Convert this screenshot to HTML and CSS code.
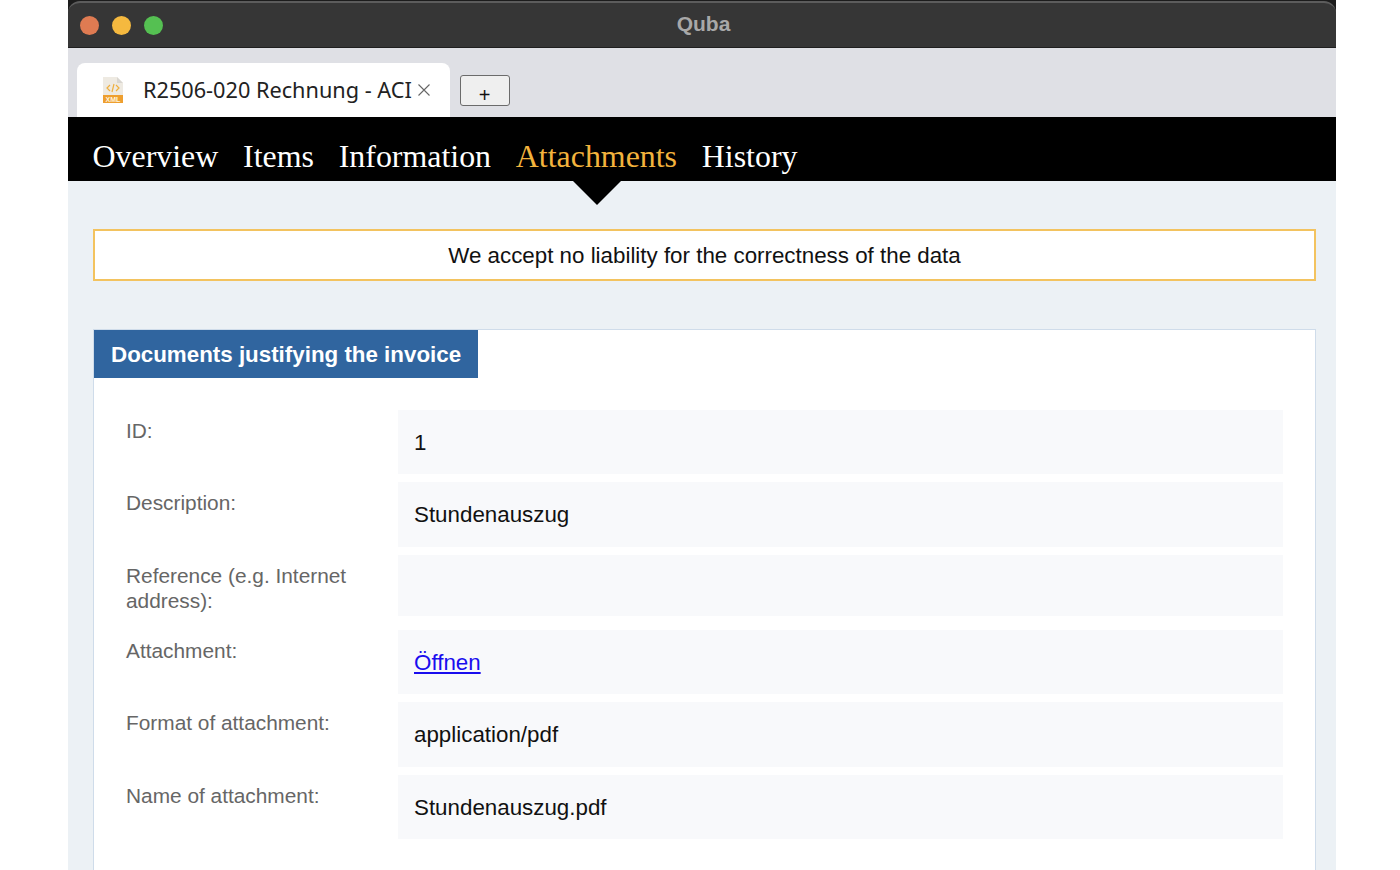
FILE: index.html
```html
<!DOCTYPE html>
<html lang="en">
<head>
    <meta charset="UTF-8">
    <title>Quba</title>
    <link rel="stylesheet" href="styles.css">
</head>
<body>
    <div class="window">
        <div class="titlebar-back">
            <div class="titlebar">
                <div class="lights">
                    <span class="light red"></span>
                    <span class="light yellow"></span>
                    <span class="light green"></span>
                </div>
                <div class="title">Quba</div>
            </div>
        </div>

        <div class="tabbar">
            <div class="tab">
                <svg class="file-icon" width="22" height="26" viewBox="0 0 22 26">
                    <path d="M1 0H15L21 6V18H1Z" fill="#eeeae2"/>
                    <path d="M15 0L21 6H15Z" fill="#d9d6d0"/>
                    <path d="M8 8L5 11L8 14M14 8L17 11L14 14M12 7L10 15" fill="none" stroke="#efb040" stroke-width="1.2"/>
                    <rect x="1" y="18" width="20" height="8" fill="#ee9f30"/>
                    <text x="11" y="25" class="file-label">XML</text>
                </svg>
                <span class="tab-name">R2506-020 Rechnung - ACI</span>
                <svg class="tab-close" width="14" height="14" viewBox="0 0 14 14">
                    <path d="M1.5 1.5L12.5 12.5M12.5 1.5L1.5 12.5" stroke="#666" stroke-width="1.1"/>
                </svg>
            </div>
            <button class="new-tab">+</button>
        </div>

        <nav class="menu">
            <a href="#">Overview</a>
            <a href="#">Items</a>
            <a href="#">Information</a>
            <a href="#" class="active">Attachments</a>
            <a href="#">History</a>
        </nav>

        <main class="content">
            <div class="notice">We accept no liability for the correctness of the data</div>

            <section class="box">
                <h2 class="box-title">Documents justifying the invoice</h2>
                <div class="rows">
                    <div class="row">
                        <div class="label">ID:</div>
                        <div class="value">1</div>
                    </div>
                    <div class="row">
                        <div class="label">Description:</div>
                        <div class="value">Stundenauszug</div>
                    </div>
                    <div class="row row-ref">
                        <div class="label">Reference (e.g. Internet address):</div>
                        <div class="value"></div>
                    </div>
                    <div class="row">
                        <div class="label">Attachment:</div>
                        <div class="value"><a href="#">Öffnen</a></div>
                    </div>
                    <div class="row">
                        <div class="label">Format of attachment:</div>
                        <div class="value">application/pdf</div>
                    </div>
                    <div class="row">
                        <div class="label">Name of attachment:</div>
                        <div class="value">Stundenauszug.pdf</div>
                    </div>
                </div>
            </section>
        </main>
    </div>
</body>
</html>
```

FILE: styles.css
```css
html, body {
    margin: 0;
    height: 100%;
    background: white;
    overflow: hidden;
}
body {
    font-family: "Liberation Sans", Arial, sans-serif;
}
.window {
    width: 1268px;
    height: 870px;
    margin-left: 68px;
    background: #ecf1f5;
    overflow: hidden;
}
.titlebar-back {
    height: 48px;
    padding-top: 1px;
    box-sizing: border-box;
    background: #1c1c1c;
}
.titlebar {
    box-sizing: border-box;
    height: 47px;
    display: flex;
    align-items: center;
    position: relative;
    background: #363636;
    border-top: 2px solid #5c5c5c;
    border-bottom: 1px solid #1f1f1f;
    border-radius: 12px 12px 0 0;
}
.lights {
    display: flex;
    gap: 13px;
    margin-left: 12px;
}
.light {
    width: 19px;
    height: 19px;
    border-radius: 50%;
}
.red { background: #df7b52; }
.yellow { background: #f5b93f; }
.green { background: #55c052; }
.title {
    position: absolute;
    left: 3px;
    right: 0;
    top: 9px;
    text-align: center;
    color: #a8a8a8;
    font-size: 21px;
    font-weight: bold;
    font-family: "Liberation Sans", sans-serif;
}
.tabbar {
    box-sizing: border-box;
    height: 69px;
    padding: 15px 0 0 9px;
    display: flex;
    align-items: flex-start;
    background: #dfe0e5;
}
.tab {
    box-sizing: border-box;
    width: 373px;
    height: 54px;
    padding-left: 25px;
    display: flex;
    align-items: center;
    background: white;
    border-radius: 8px 8px 0 0;
}
.file-icon {
    flex: none;
}
.file-label {
    font-family: "Liberation Sans", sans-serif;
    font-size: 7px;
    font-weight: bold;
    fill: #fff3dc;
    text-anchor: middle;
}
.tab-name {
    width: 269px;
    margin: -2px 0 0 19px;
    white-space: nowrap;
    font-family: "Noto Sans", sans-serif;
    font-size: 21.7px;
    color: #222;
}
.tab-close {
    flex: none;
    margin-left: 5px;
}
.new-tab {
    box-sizing: border-box;
    width: 50px;
    height: 31px;
    margin: 12px 0 0 9.5px;
    padding: 8px 0 0;
    background: #efefef;
    border: 1px solid #6b6b6b;
    border-radius: 3px;
    font-family: "Liberation Sans", sans-serif;
    font-size: 20px;
    line-height: 22px;
    color: #111;
}
.menu {
    box-sizing: border-box;
    height: 64px;
    padding: 21px 0 0 24.5px;
    display: flex;
    gap: 24.8px;
    background: black;
}
.menu a {
    position: relative;
    font-family: "Liberation Serif", serif;
    font-size: 31.9px;
    line-height: 38px;
    color: white;
    text-decoration: none;
}
.menu a.active {
    color: #f3b33d;
}
.menu a.active::after {
    content: "";
    position: absolute;
    left: 50%;
    top: 43px;
    margin-left: -23.5px;
    border-left: 24px solid transparent;
    border-right: 24px solid transparent;
    border-top: 24px solid black;
}
.content {
    padding: 48px 20px 0 25px;
}
.notice {
    box-sizing: border-box;
    height: 51.5px;
    line-height: 49px;
    text-align: center;
    font-size: 22.35px;
    color: #111;
    background: white;
    border: 2px solid #f3c35f;
}
.box {
    margin-top: 48.5px;
    background: white;
    border: 1px solid #cfdcea;
    height: 600px;
}
.box-title {
    display: inline-block;
    margin: 0;
    padding: 0 17px;
    height: 48px;
    line-height: 50px;
    font-size: 22.35px;
    font-weight: bold;
    color: white;
    background: #30659f;
}
.rows {
    padding: 32px 32px 0 32px;
    display: flex;
    flex-direction: column;
    gap: 8px;
}
.row {
    display: flex;
    height: 64.4px;
}
.row-ref {
    height: 67px;
}
.row-ref .value {
    height: 61px;
}
.label {
    width: 272px;
    padding-top: 8px;
    font-size: 20.85px;
    line-height: 25px;
    color: #666;
}
.value {
    flex: 1;
    box-sizing: border-box;
    padding: 20px 16px 0;
    font-size: 22.35px;
    line-height: 25px;
    color: #111;
    background: #f8f9fb;
}
.value a {
    color: #1a0dee;
}
```
